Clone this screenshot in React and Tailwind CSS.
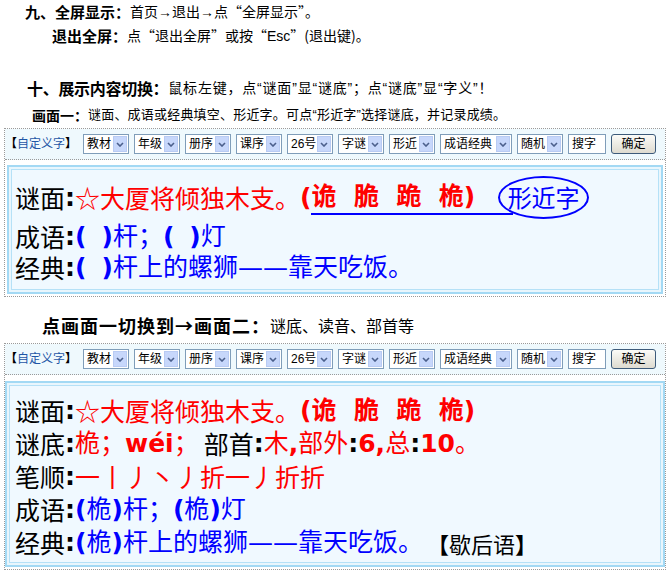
import React from 'react';

const sans = "font-['Liberation_Sans','Noto_Sans_CJK_SC',sans-serif]";
const cjk = "font-['Noto_Sans_CJK_SC',sans-serif]";
const panelFont = "font-['DejaVu_Sans','Noto_Sans_CJK_SC',sans-serif]";

function Chevron() {
  return (
    <svg width="8" height="5" viewBox="0 0 8 5">
      <path d="M1 1 L4 4 L7 1" fill="none" stroke="#4b5f8c" strokeWidth="1.6" />
    </svg>
  );
}

function Sel({ label, className = 'w-[46px]' }) {
  return (
    <div className={`flex h-[20px] items-center justify-between border border-[#7f9db9] bg-white pl-[3px] ${className}`}>
      <span className="text-[12px] leading-none text-black">{label}</span>
      <span className="mr-[1px] flex h-[16px] w-[14px] items-center justify-center border border-[#b9cbf3] bg-[#c7d7fb]">
        <Chevron />
      </span>
    </div>
  );
}

function Toolbar() {
  return (
    <div className={`flex h-[31px] items-center border-b border-dotted border-[#9a9a9a] bg-[#eff9fd] ${sans}`}>
      <div className="w-[78px] text-[12px] leading-none">
        <b className="text-black">【</b>
        <span className="text-[#1f56a6]">自定义字</span>
        <b className="text-black">】</b>
      </div>
      <div className="flex items-center gap-[5px]">
        <Sel label="教材" />
        <Sel label="年级" />
        <Sel label="册序" />
        <Sel label="课序" />
        <Sel label="26号" />
        <Sel label="字谜" />
        <Sel label="形近" />
        <Sel label="成语经典" className="w-[72px]" />
        <Sel label="随机" />
        <div className="flex h-[20px] w-[38px] items-center border border-[#7f9db9] bg-white pl-[3px] text-[12px] leading-none">搜字</div>
        <div className="flex h-[20px] w-[45px] items-center justify-center rounded-[3px] border border-[#3c5a7a] bg-gradient-to-b from-[#fbfbf8] to-[#dedbd0] text-[12px] leading-none">确定</div>
      </div>
    </div>
  );
}

function Label({ children }) {
  return (
    <>
      <span className={`text-black ${cjk}`}>{children}</span>
      <b className="text-black">:</b>
    </>
  );
}

const R = ({ children, bold }) => <span className={`text-[#ff0000] ${bold ? 'font-bold' : ''}`}>{children}</span>;
const B = ({ children, bold }) => <span className={`text-[#0000ff] ${bold ? 'font-bold' : ''}`}>{children}</span>;

function Blank() {
  return (
    <>
      <B bold>(</B>
      <span className="w-[15px]" />
      <B bold>)</B>
    </>
  );
}

function Riddle({ circle }) {
  return (
    <div className={`flex items-center whitespace-nowrap ${circle ? 'h-[46px]' : 'h-[33px]'}`}>
      <Label>谜面</Label>
      <span className={`text-[#ff0000] ${cjk}`}>☆大厦将倾独木支。</span>
      <R bold>(</R>
      {circle ? (
        <>
          <span className="border-b-2 border-[#0000ff] pr-[38px] font-bold leading-[33px] text-[#ff0000]">
            诡&nbsp;&nbsp;脆&nbsp;&nbsp;跪&nbsp;&nbsp;桅)
          </span>
          <span className={`-ml-[15px] flex h-[43px] w-[91px] items-center justify-center rounded-[50%] border-2 border-[#0000ff] text-[24px] text-[#0000ff] ${cjk}`}>
            形近字
          </span>
        </>
      ) : (
        <span className="font-bold text-[#ff0000]">诡&nbsp;&nbsp;脆&nbsp;&nbsp;跪&nbsp;&nbsp;桅)</span>
      )}
    </div>
  );
}

function Panel({ children }) {
  return (
    <div className="border-2 border-[#a3d9f4] bg-[#e9f6fd] p-[2px]">
      <div className={`border border-[#b5e1f7] bg-[#f0f9ff] text-[25px] leading-none ${panelFont}`}>{children}</div>
    </div>
  );
}

export default function App() {
  return (
    <div className={`h-[573px] w-[670px] overflow-hidden bg-white text-black ${sans}`}>
      {/* 说明文字 */}
      <div className="flex h-[24px] items-center whitespace-nowrap pl-[25px]">
        <b className={`text-[15px] ${cjk}`}>九、全屏显示：</b>
        <span className={`text-[14px] ${cjk}`}>
          首页<span className={sans}>→</span>退出<span className={sans}>→</span>点“全屏显示”。
        </span>
      </div>
      <div className="flex h-[24px] items-center whitespace-nowrap pl-[52px]">
        <b className={`text-[15px] ${cjk}`}>退出全屏：</b>
        <span className={`text-[14px] ${cjk}`}>
          点“退出全屏”或按“<span className={sans}>Esc</span>”(退出键)。
        </span>
      </div>
      <div className="mt-[28px] flex h-[24px] items-center whitespace-nowrap pl-[27px]">
        <b className={`text-[16px] tracking-[-0.3px] ${cjk}`}>十、展示内容切换：</b>
        <span className="text-[14px] tracking-[0.8px]">鼠标左键，点“谜面”显“谜底”；点“谜底”显“字义”！</span>
      </div>
      <div className="mt-[3px] flex h-[24px] items-center whitespace-nowrap pl-[32px]">
        <b className={`text-[14px] ${cjk}`}>画面一：</b>
        <span className="text-[13px] tracking-[0.2px]">谜面、成语或经典填空、形近字。可点“形近字”选择谜底，并记录成绩。</span>
      </div>

      {/* 画面一 */}
      <div className="mx-[4px] mt-[1px] border border-dotted border-[#9a9a9a]">
        <Toolbar />
        <div className="px-[2px] pb-[2px] pt-[5px]">
          <Panel>
            <div className="pl-[3px] pt-[4px] pb-[7px]">
              <Riddle circle />
              <div className="flex h-[32px] items-center whitespace-nowrap">
                <Label>成语</Label>
                <Blank />
                <B>杆；</B>
                <Blank />
                <B>灯</B>
              </div>
              <div className="flex h-[30px] items-center whitespace-nowrap">
                <Label>经典</Label>
                <Blank />
                <B>杆上的螺狮——靠天吃饭。</B>
              </div>
            </div>
          </Panel>
        </div>
      </div>

      <div className="mt-[15px] flex h-[26px] items-center whitespace-nowrap pl-[42px]">
        <b className={`text-[18px] tracking-[1px] ${cjk}`}>点画面一切换到→画面二：</b>
        <span className={`text-[16px] ${cjk}`}>谜底、读音、部首等</span>
      </div>

      {/* 画面二 */}
      <div className="mx-[4px] mt-[5px] border border-dotted border-[#9a9a9a]">
        <Toolbar />
        <div className="pb-[2px] pt-[6px]">
          <Panel>
            <div className="pl-[5px] pt-[8px] pb-[3px]">
              <Riddle />
              <div className="flex h-[33px] items-center whitespace-nowrap">
                <Label>谜底</Label>
                <R>桅；</R>
                <R bold>wéi</R>
                <R>；</R>
                <span className={`ml-[5px] ${cjk}`}>部首</span>
                <b>:</b>
                <R>木</R>
                <R bold>,</R>
                <R>部外</R>
                <b>:</b>
                <R bold>6,</R>
                <R>总</R>
                <b>:</b>
                <R bold>10</R>
                <R>。</R>
              </div>
              <div className="flex h-[33px] items-center whitespace-nowrap">
                <Label>笔顺</Label>
                <span className={`text-[#ff0000] ${cjk}`}>一丨丿丶丿折一丿折折</span>
              </div>
              <div className="flex h-[33px] items-center whitespace-nowrap">
                <Label>成语</Label>
                <B bold>(</B>
                <B>桅</B>
                <B bold>)</B>
                <B>杆；</B>
                <B bold>(</B>
                <B>桅</B>
                <B bold>)</B>
                <B>灯</B>
              </div>
              <div className="flex h-[33px] items-center whitespace-nowrap">
                <Label>经典</Label>
                <B bold>(</B>
                <B>桅</B>
                <B bold>)</B>
                <B>杆上的螺狮——靠天吃饭。</B>
                <span className={`ml-[4px] text-[22px] text-black ${cjk}`}>
                  <b>【</b>歇后语<b>】</b>
                </span>
              </div>
            </div>
          </Panel>
        </div>
      </div>
    </div>
  );
}
